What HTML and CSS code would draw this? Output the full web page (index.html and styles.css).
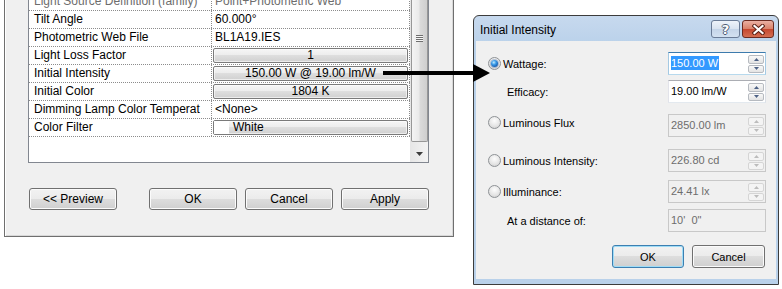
FILE: index.html
```html
<!DOCTYPE html>
<html lang="en">
<head>
    <meta charset="UTF-8">
    <title>Initial Intensity</title>
    <link rel="stylesheet" href="styles.css">
</head>
<body>
<div class="desk">

    <!-- Type properties dialog, only its lower part is on screen -->
    <div class="props-dlg">
        <div class="prop-list">
            <div class="prop-grid">
                <div class="prop-row readonly">
                    <div class="prop-name">Light Source Definition (family)</div>
                    <div class="prop-val">Point+Photometric Web</div>
                </div>
                <div class="prop-row">
                    <div class="prop-name">Tilt Angle</div>
                    <div class="prop-val">60.000&deg;</div>
                </div>
                <div class="prop-row">
                    <div class="prop-name">Photometric Web File</div>
                    <div class="prop-val">BL1A19.IES</div>
                </div>
                <div class="prop-row">
                    <div class="prop-name">Light Loss Factor</div>
                    <div class="prop-val boxed"><span class="cell-btn">1</span></div>
                </div>
                <div class="prop-row">
                    <div class="prop-name">Initial Intensity</div>
                    <div class="prop-val boxed"><span class="cell-btn">150.00 W @ 19.00 lm/W</span></div>
                </div>
                <div class="prop-row">
                    <div class="prop-name">Initial Color</div>
                    <div class="prop-val boxed"><span class="cell-btn">1804 K</span></div>
                </div>
                <div class="prop-row">
                    <div class="prop-name">Dimming Lamp Color Temperat</div>
                    <div class="prop-val">&lt;None&gt;</div>
                </div>
                <div class="prop-row">
                    <div class="prop-name">Color Filter</div>
                    <div class="prop-val boxed">
                        <span class="cell-btn color"><span class="swatch"></span><span class="color-name">White</span></span>
                    </div>
                </div>
            </div>
            <div class="vscroll">
                <div class="sb-thumb"><span class="sb-grip"></span></div>
                <div class="sb-down">
                    <svg width="7" height="4" viewBox="0 0 7 4"><path d="M0 0h7L3.5 4z" fill="#3c3c3c"/></svg>
                </div>
            </div>
        </div>
        <div class="dlg-actions">
            <button class="btn btn-preview">&lt;&lt; Preview</button>
            <button class="btn">OK</button>
            <button class="btn">Cancel</button>
            <button class="btn">Apply</button>
        </div>
    </div>

    <!-- Initial Intensity dialog -->
    <div class="intensity-dlg">
        <div class="titlebar">
            <span class="title">Initial Intensity</span>
            <div class="caption-btns">
                <span class="cap-btn cap-help">?</span>
                <span class="cap-btn cap-close">
                    <svg width="13" height="11" viewBox="0 0 13 11">
                        <path d="M2.5 2l8 7M10.5 2l-8 7" stroke="#5a2016" stroke-width="4.2" stroke-linecap="square"/>
                        <path d="M2.5 2l8 7M10.5 2l-8 7" stroke="#fff" stroke-width="2.2" stroke-linecap="square"/>
                    </svg>
                </span>
            </div>
        </div>
        <div class="dlg-body">
            <div class="opt-row">
                <label class="choice"><span class="radio on"></span>Wattage:</label>
                <div class="field live focused">
                    <span class="field-text"><span class="sel">150.00 W</span></span>
                    <span class="spin">
                        <span class="spin-btn"><svg width="5" height="3" viewBox="0 0 5 3"><path d="M0 3h5L2.5 0z" fill="currentColor"/></svg></span>
                        <span class="spin-btn"><svg width="5" height="3" viewBox="0 0 5 3"><path d="M0 0h5L2.5 3z" fill="currentColor"/></svg></span>
                    </span>
                </div>
            </div>
            <div class="opt-row mt-5">
                <span class="choice sub">Efficacy:</span>
                <div class="field live">
                    <span class="field-text">19.00 lm/W</span>
                    <span class="spin">
                        <span class="spin-btn"><svg width="5" height="3" viewBox="0 0 5 3"><path d="M0 3h5L2.5 0z" fill="currentColor"/></svg></span>
                        <span class="spin-btn"><svg width="5" height="3" viewBox="0 0 5 3"><path d="M0 0h5L2.5 3z" fill="currentColor"/></svg></span>
                    </span>
                </div>
            </div>
            <div class="opt-row mt-11">
                <label class="choice raised"><span class="radio"></span>Luminous Flux</label>
                <div class="field">
                    <span class="field-text">2850.00 lm</span>
                    <span class="spin">
                        <span class="spin-btn"><svg width="5" height="3" viewBox="0 0 5 3"><path d="M0 3h5L2.5 0z" fill="currentColor"/></svg></span>
                        <span class="spin-btn"><svg width="5" height="3" viewBox="0 0 5 3"><path d="M0 0h5L2.5 3z" fill="currentColor"/></svg></span>
                    </span>
                </div>
            </div>
            <div class="opt-row mt-12">
                <label class="choice"><span class="radio"></span>Luminous Intensity:</label>
                <div class="field">
                    <span class="field-text">226.80 cd</span>
                    <span class="spin">
                        <span class="spin-btn"><svg width="5" height="3" viewBox="0 0 5 3"><path d="M0 3h5L2.5 0z" fill="currentColor"/></svg></span>
                        <span class="spin-btn"><svg width="5" height="3" viewBox="0 0 5 3"><path d="M0 0h5L2.5 3z" fill="currentColor"/></svg></span>
                    </span>
                </div>
            </div>
            <div class="opt-row mt-8">
                <label class="choice"><span class="radio"></span>Illuminance:</label>
                <div class="field">
                    <span class="field-text">24.41 lx</span>
                    <span class="spin">
                        <span class="spin-btn"><svg width="5" height="3" viewBox="0 0 5 3"><path d="M0 3h5L2.5 0z" fill="currentColor"/></svg></span>
                        <span class="spin-btn"><svg width="5" height="3" viewBox="0 0 5 3"><path d="M0 0h5L2.5 3z" fill="currentColor"/></svg></span>
                    </span>
                </div>
            </div>
            <div class="opt-row mt-6">
                <span class="choice sub">At a distance of:</span>
                <div class="field">
                    <span class="field-text">10'&nbsp; 0"</span>
                </div>
            </div>
            <div class="dlg-foot">
                <button class="btn btn-sm default">OK</button>
                <button class="btn btn-sm wide">Cancel</button>
            </div>
        </div>
    </div>

    <!-- callout arrow from the property row to the dialog -->
    <svg class="pointer" width="112" height="24" viewBox="0 0 112 24">
        <path d="M3 9h91v4H3z" fill="#000"/>
        <path d="M93 2l17 9-17 9z" fill="#000"/>
    </svg>

</div>
</body>
</html>
```

FILE: styles.css
```css
* {
    box-sizing: border-box;
}

body {
    margin: 0;
    background: #fff;
    font-family: "Liberation Sans", Arial, sans-serif;
    font-size: 12px;
    color: #000;
}

.desk {
    position: relative;
    width: 782px;
    height: 289px;
    overflow: hidden;
}

/* ---------- left: properties dialog ---------- */

.props-dlg {
    position: absolute;
    left: 4px;
    top: -30px;
    width: 450px;
    height: 267px;
    padding: 21px 0 0 23px;
    background: #f0f0f0;
    border: 1px solid #6f6f6f;
    box-shadow: inset 1px 1px 0 #fff, inset -1px -1px 0 #d8d8d8;
}

.prop-list {
    display: flex;
    width: 401px;
    height: 171px;
    border: 1px solid #828790;
    background: #fff;
}

.prop-grid {
    width: 381px;
}

.prop-row {
    display: flex;
    height: 18px;
    border-bottom: 1px dotted #8c8c8c;
}

.prop-name {
    width: 183px;
    padding-left: 5px;
    border-right: 1px dotted #8c8c8c;
    line-height: 17px;
    white-space: nowrap;
    overflow: hidden;
}

.prop-val {
    width: 198px;
    padding-left: 3px;
    border-right: 1px dotted #8c8c8c;
    line-height: 17px;
    white-space: nowrap;
    overflow: hidden;
}

.prop-row.readonly {
    color: #6d6d6d;
}

.prop-val.boxed {
    padding: 1px 1px 0 1px;
}

.cell-btn {
    display: block;
    height: 15px;
    border: 1px solid #7a7a7a;
    border-radius: 2px;
    background: linear-gradient(#f6f6f6, #ececec 50%, #dedede 50%, #d0d0d0);
    box-shadow: inset 0 0 0 1px rgba(255, 255, 255, 0.6);
    text-align: center;
    line-height: 13px;
}

.cell-btn.color {
    display: flex;
    text-align: left;
}

.swatch {
    width: 15px;
    background: #fff;
}

.color-name {
    padding-left: 4px;
}

.vscroll {
    width: 18px;
    padding-left: 1px;
    display: flex;
    flex-direction: column;
    background: linear-gradient(90deg, #e6e6e6, #f3f3f3);
}

.sb-thumb {
    height: 149px;
    padding-top: 42px;
    display: flex;
    justify-content: center;
    border: 1px solid #979797;
    border-top: 0;
    border-radius: 0 0 2px 2px;
    background: linear-gradient(90deg, #f4f4f4, #eaeaea 45%, #dadada 55%, #cecece);
}

.sb-grip {
    width: 7px;
    height: 7px;
    background: repeating-linear-gradient(#6e6e6e 0 1px, #f6f6f6 1px 2px);
}

.sb-down {
    margin-top: 4px;
    height: 16px;
    display: flex;
    align-items: center;
    justify-content: center;
}

.dlg-actions {
    display: flex;
    gap: 8px;
    margin-top: 25px;
    padding-left: 1px;
}

.btn {
    width: 88px;
    height: 22px;
    padding: 0;
    font: inherit;
    color: #000;
    border: 1px solid #707070;
    border-radius: 3px;
    background: linear-gradient(#f2f2f2, #ebebeb 50%, #dddddd 50%, #cfcfcf);
    box-shadow: inset 0 0 0 1px #fbfbfb;
}

.btn-preview {
    margin-right: 24px;
}

/* ---------- right: Initial Intensity dialog ---------- */

.intensity-dlg {
    position: absolute;
    left: 473px;
    top: 15px;
    width: 306px;
    height: 270px;
    display: flex;
    flex-direction: column;
    padding: 0 2px 5px;
    border: 1px solid #3c3c3c;
    border-radius: 6px 6px 0 0;
    background: linear-gradient(#c7d9ee, #b9d1ea 30px);
    font-size: 11px;
}

.titlebar {
    height: 25px;
    display: flex;
    justify-content: space-between;
    padding: 0 2px 0 4px;
}

.title {
    margin-top: 7px;
    font-size: 12px;
    line-height: 14px;
}

.caption-btns {
    display: flex;
    gap: 2px;
    margin-top: 4px;
}

.cap-btn {
    height: 18px;
    display: flex;
    align-items: center;
    justify-content: center;
    border: 1px solid #6a7b96;
    border-radius: 3px;
}

.cap-help {
    width: 29px;
    background: linear-gradient(#eef3fa, #d9e3f0 50%, #c4d4e8 50%, #d3e1f1);
    color: #fff;
    font: bold 13px "DejaVu Sans", sans-serif;
    text-shadow: 1px 0 #4d5b74, -1px 0 #4d5b74, 0 1px #4d5b74, 0 -1px #4d5b74;
}

.cap-close {
    width: 32px;
    border-color: #6b2a20;
    background: linear-gradient(#eab0a3, #d98068 50%, #c5462e 50%, #d46e52);
}

.dlg-body {
    flex: 1;
    background: #f0f0f0;
    padding: 11px 10px 0 12px;
}

.opt-row {
    display: flex;
    align-items: center;
    height: 23px;
}

.mt-5 { margin-top: 5px; }
.mt-6 { margin-top: 6px; }
.mt-8 { margin-top: 8px; }
.mt-11 { margin-top: 11px; }
.mt-12 { margin-top: 12px; }

.choice {
    width: 180px;
    display: flex;
    align-items: center;
    gap: 2px;
}

.choice.sub {
    padding-left: 19px;
}

.choice.raised {
    margin-top: -6px;
}

.radio {
    width: 13px;
    height: 13px;
    display: flex;
    align-items: center;
    justify-content: center;
    border: 1px solid #8e9296;
    border-radius: 50%;
    background: radial-gradient(circle at 50% 35%, #fdfdfd, #e6e6e6 55%, #cbcbcb);
}

.radio.on::after {
    content: "";
    width: 7px;
    height: 7px;
    border-radius: 50%;
    background: radial-gradient(circle at 40% 35%, #c4ecff 0, #3c9ce8 35%, #0c4aa0 85%);
    box-shadow: 0 0 0 1px rgba(30, 80, 150, 0.3);
}

.field {
    width: 98px;
    height: 23px;
    display: flex;
    border: 1px solid #c8c8c8;
    color: #6d6d6d;
}

.field.live {
    background: #fff;
    color: #000;
    border-color: #abadb3 #dbdfe6 #e3e9ef #e2e3ea;
}

.field.focused {
    border-color: #3d7bad #a4c9e3 #b7d9ed #a4c9e3;
}

.field-text {
    flex: 1;
    padding-left: 2px;
    line-height: 20px;
    white-space: nowrap;
}

.sel {
    display: inline-block;
    padding: 0 1px 0 0;
    line-height: 14px;
    background: #3399ff;
    color: #fff;
}

.spin {
    width: 17px;
    display: flex;
    flex-direction: column;
    gap: 1px;
    padding: 2px 1px 1px 0;
}

.spin-btn {
    flex: 1;
    display: flex;
    align-items: center;
    justify-content: center;
    border: 1px solid #b6bac0;
    border-radius: 2px;
    background: linear-gradient(#f9f9f9, #e3e3e3);
    color: #4d6185;
}

.field:not(.live) .spin-btn {
    border-color: #d5d5d5;
    background: #f4f4f4;
    color: #bcbcbc;
}

.dlg-foot {
    display: flex;
    justify-content: flex-end;
    gap: 8px;
    margin-top: 13px;
    padding-right: 1px;
}

.btn-sm {
    width: 72px;
    height: 23px;
    font-size: 11px;
}

.btn-sm.wide {
    width: 73px;
}

.btn.default {
    border-color: #3c7fb1;
    box-shadow: inset 0 0 0 1px #9fdcf6;
}

.pointer {
    position: absolute;
    left: 380px;
    top: 62px;
    z-index: 2;
}
```
